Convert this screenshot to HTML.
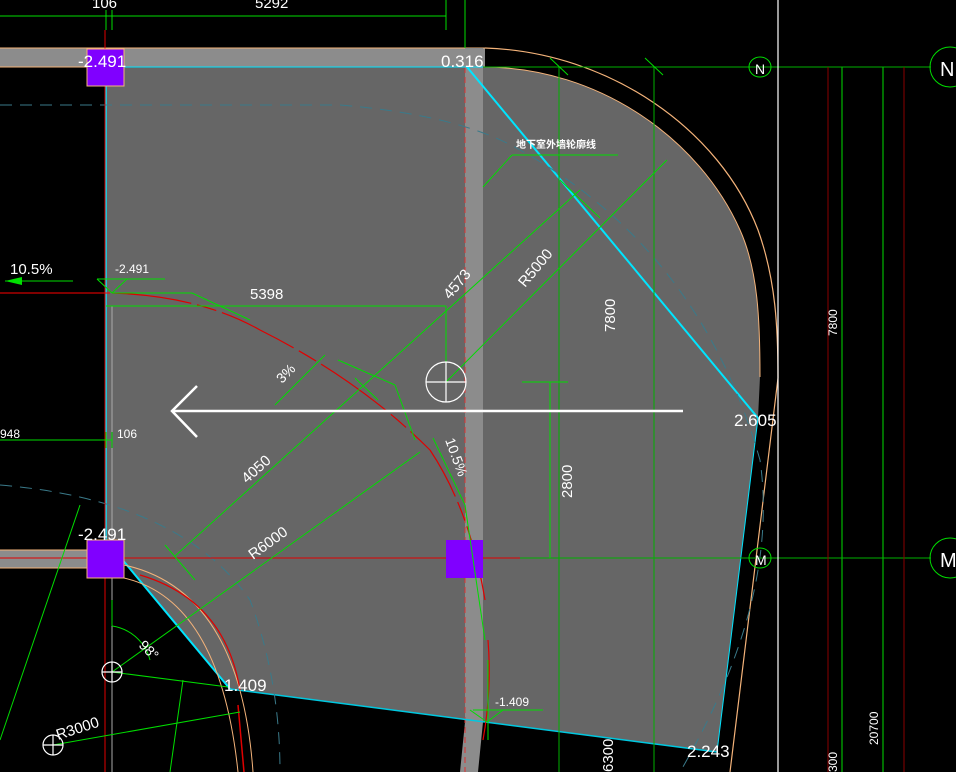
<!DOCTYPE html>
<html><head><meta charset="utf-8"><style>
html,body{margin:0;padding:0;background:#000;width:956px;height:772px;overflow:hidden}
svg{display:block}
text{font-family:"Liberation Sans","Noto Sans CJK SC",sans-serif;fill:#fff}
.n{font-family:"Liberation Sans Narrow","Liberation Sans",sans-serif}
</style></head><body>
<svg width="956" height="772" viewBox="0 0 956 772" xmlns="http://www.w3.org/2000/svg">
<rect width="956" height="772" fill="#000"/>
<path d="M106 67 L483 67 C600 67 700 140 740 230 C758 270 760 320 760 377 L758 418 L717 752 L483 722 L230 689 L106 540 Z" fill="#666"/>
<rect x="0" y="48" width="485" height="19" fill="#8c8c8c"/>
<line x1="0" y1="48" x2="485" y2="48" stroke="#f4b37a" stroke-width="1"/>
<line x1="0" y1="67" x2="483" y2="67" stroke="#f4b37a" stroke-width="1"/>
<rect x="0" y="550" width="106" height="18" fill="#8c8c8c"/>
<line x1="0" y1="550" x2="106" y2="550" stroke="#f4b37a"/>
<line x1="0" y1="568" x2="106" y2="568" stroke="#f4b37a"/>
<path d="M465 48 L483 48 L483 722 L478 772 L460 772 L465 722 Z" fill="#8c8c8c"/>
<line x1="465" y1="67" x2="465" y2="772" stroke="#e03030" stroke-dasharray="6 4" stroke-width="1"/>
<path d="M485 48 C610 52 720 130 758 230 C776 280 778 330 778 378 L730 772" fill="none" stroke="#f4b37a" stroke-width="1.2"/>
<path d="M483 67 C600 67 700 140 740 230 C758 270 760 320 760 377" fill="none" stroke="#f4b37a" stroke-width="1"/>
<line x1="106" y1="67" x2="106" y2="540" stroke="#00e5ff" stroke-width="1.5"/>
<line x1="106" y1="67" x2="483" y2="67" stroke="#00e5ff" stroke-width="1"/>
<line x1="467" y1="67" x2="758" y2="418" stroke="#00e5ff" stroke-width="2"/>
<line x1="758" y1="418" x2="717" y2="752" stroke="#00e5ff" stroke-width="1"/>
<line x1="717" y1="752" x2="230" y2="689" stroke="#00c8e0" stroke-width="1.5"/>
<line x1="106" y1="540" x2="230" y2="689" stroke="#00e5ff" stroke-width="2"/>
<path d="M0 105 L340 105 Q460 115 520 150 Q700 250 760 460 Q780 600 680 772" fill="none" stroke="#3a7a8a" stroke-dasharray="12 8" stroke-width="1"/>
<path d="M0 485 Q180 500 250 600 Q280 680 280 772" fill="none" stroke="#3a7a8a" stroke-dasharray="12 8" stroke-width="1"/>
<path d="M124 578 Q220 600 238 772" fill="none" stroke="#f4b37a"/>
<path d="M124 565 Q240 590 253 772" fill="none" stroke="#f4b37a"/>
<path d="M140 575 Q225 600 240 690" fill="none" stroke="#e00000" stroke-width="1.2"/>
<line x1="238" y1="705" x2="244" y2="772" stroke="#e00000" stroke-width="1.5"/>
<path d="M112 293 Q200 296 260 330 Q360 380 430 450 Q470 510 485 600" fill="none" stroke="#e00000" stroke-width="1.2" stroke-dasharray="80 6 20 6"/>
<path d="M488 640 Q492 690 483 740" fill="none" stroke="#e00000" stroke-width="1.2"/>
<line x1="0" y1="293" x2="110" y2="293" stroke="#ff0000" stroke-width="1"/>
<line x1="0" y1="558" x2="520" y2="558" stroke="#e00000" stroke-width="1"/>
<line x1="520" y1="558" x2="760" y2="558" stroke="#c00000" stroke-width="1"/>
<line x1="105" y1="30" x2="105" y2="772" stroke="#e00000" stroke-width="1"/>
<line x1="112" y1="306" x2="112" y2="772" stroke="#aaa" stroke-width="1"/>
<rect x="87" y="49" width="37" height="37" fill="#8000ff" stroke="#f4b37a"/>
<rect x="87" y="540" width="37" height="38" fill="#8000ff" stroke="#f4b37a"/>
<rect x="446" y="540" width="37" height="38" fill="#8000ff"/>
<g stroke="#00dd00" stroke-width="1" fill="none">
<line x1="0" y1="16" x2="446" y2="16"/>
<line x1="106" y1="10" x2="106" y2="30"/><line x1="112" y1="10" x2="112" y2="30"/><line x1="446" y1="0" x2="446" y2="30"/>
<line x1="465" y1="0" x2="465" y2="48"/>
<line x1="446" y1="306" x2="446" y2="400"/>
<line x1="559" y1="67" x2="559" y2="772" stroke="#00b000"/>
<line x1="654" y1="67" x2="654" y2="772" stroke="#00b000"/>
<line x1="842" y1="67" x2="842" y2="772"/>
<line x1="883" y1="67" x2="883" y2="772"/>
<line x1="483" y1="67" x2="931" y2="67" stroke="#00b000"/>
<line x1="520" y1="558" x2="931" y2="558" stroke="#00b000"/>
<ellipse cx="760" cy="67" rx="11" ry="10"/>
<ellipse cx="760" cy="558" rx="11" ry="10"/>
<ellipse cx="950" cy="67" rx="20" ry="20"/>
<ellipse cx="950" cy="558" rx="20" ry="20"/>
<line x1="5" y1="281" x2="73" y2="281"/>
<line x1="97" y1="279" x2="112" y2="293"/><line x1="112" y1="293" x2="127" y2="279"/><line x1="97" y1="279" x2="165" y2="279"/>
<line x1="112" y1="293" x2="192" y2="293"/><line x1="192" y1="293" x2="250" y2="320"/>
<line x1="106" y1="306" x2="446" y2="306"/>
<line x1="0" y1="440" x2="112" y2="440"/>
<line x1="106" y1="432" x2="106" y2="448"/><line x1="112" y1="432" x2="112" y2="448"/>
<line x1="175" y1="556" x2="580" y2="190"/>
<line x1="165" y1="545" x2="195" y2="580"/>
<line x1="560" y1="180" x2="600" y2="218"/>
<line x1="112" y1="672" x2="420" y2="452"/>
<line x1="446" y1="382" x2="667" y2="160"/>
<line x1="275" y1="405" x2="325" y2="355"/>
<line x1="338" y1="360" x2="395" y2="385"/><line x1="395" y1="385" x2="415" y2="440"/>
<line x1="355" y1="378" x2="378" y2="400"/>
<line x1="433" y1="438" x2="465" y2="505"/>
<line x1="465" y1="505" x2="485" y2="640"/>
<line x1="483" y1="187" x2="512" y2="155"/><line x1="512" y1="155" x2="618" y2="155"/>
<line x1="550" y1="382" x2="550" y2="558"/><line x1="522" y1="382" x2="568" y2="382"/>
<line x1="550" y1="58" x2="568" y2="75"/><line x1="645" y1="58" x2="663" y2="75"/>
<line x1="112" y1="626" x2="112" y2="600"/>
<path d="M112 626 A46 46 0 0 1 150 660"/>
<line x1="112" y1="672" x2="228" y2="687"/>
<line x1="53" y1="745" x2="240" y2="712"/>
<line x1="0" y1="740" x2="80" y2="505"/>
<line x1="183" y1="680" x2="170" y2="772"/>
<line x1="488" y1="660" x2="488" y2="740"/><line x1="473" y1="710" x2="543" y2="710"/>
<line x1="470" y1="710" x2="487" y2="722"/><line x1="503" y1="710" x2="487" y2="722"/>
</g>
<g stroke="#8a0000" stroke-width="1"><line x1="828" y1="67" x2="828" y2="772"/><line x1="904" y1="67" x2="904" y2="772"/></g>
<polygon points="5,281 22,277 22,285" fill="#00e000"/>
<line x1="778" y1="0" x2="778" y2="772" stroke="#fff" stroke-width="1.2"/>
<g stroke="#fff" stroke-width="2.5" fill="none"><line x1="172" y1="411" x2="683" y2="411"/><polyline points="197,386 172,411 197,437"/></g>
<g stroke="#fff" stroke-width="1.2" fill="none">
<circle cx="446" cy="382" r="20"/><line x1="426" y1="382" x2="466" y2="382"/><line x1="446" y1="362" x2="446" y2="402"/>
<circle cx="112" cy="672" r="10"/><line x1="102" y1="672" x2="122" y2="672"/><line x1="112" y1="662" x2="112" y2="682"/>
<circle cx="53" cy="745" r="10"/><line x1="43" y1="745" x2="63" y2="745"/><line x1="53" y1="735" x2="53" y2="755"/>
</g>
<text x="78" y="67" font-size="17">-2.491</text>
<text x="441" y="67" font-size="17">0.316</text>
<text x="78" y="540" font-size="17">-2.491</text>
<text x="734" y="426" font-size="17">2.605</text>
<text x="224" y="691" font-size="17">1.409</text>
<text x="687" y="757" font-size="17">2.243</text>
<text x="92" y="8" font-size="15" class="n">106</text>
<text x="255" y="8" font-size="15" class="n">5292</text>
<text x="10" y="274" font-size="15" class="n">10.5%</text>
<text x="115" y="273" font-size="12" class="n">-2.491</text>
<text x="250" y="299" font-size="15" class="n">5398</text>
<text x="0" y="438" font-size="12" class="n">948</text>
<text x="117" y="438" font-size="12" class="n">106</text>
<text x="495" y="706" font-size="12" class="n">-1.409</text>
<text x="516" y="148" font-size="10" font-weight="bold">地下室外墙轮廓线</text>
<text x="755" y="74" font-size="14">N</text>
<text x="755" y="565" font-size="14">M</text>
<text x="940" y="76" font-size="20" class="n">N</text>
<text x="940" y="567" font-size="20" class="n">M</text>
<text font-size="15" transform="translate(615,332) rotate(-90)" class="n">7800</text>
<text font-size="15" transform="translate(572,498) rotate(-90)" class="n">2800</text>
<text font-size="12" transform="translate(837,336) rotate(-90)" class="n">7800</text>
<text font-size="12" transform="translate(878,745) rotate(-90)" class="n">20700</text>
<text font-size="12" transform="translate(837,772) rotate(-90)" class="n">300</text>
<text font-size="15" transform="translate(613,772) rotate(-90)" class="n">6300</text>
<text font-size="15" transform="translate(450,300) rotate(-50)" class="n">4573</text>
<text font-size="15" transform="translate(525,288) rotate(-50)" class="n">R5000</text>
<text font-size="15" transform="translate(247,484) rotate(-42)" class="n">4050</text>
<text font-size="15" transform="translate(253,560) rotate(-36)" class="n">R6000</text>
<text font-size="14" transform="translate(282,384) rotate(-45)" class="n">3%</text>
<text font-size="14" transform="translate(445,440) rotate(70)" class="n">10.5%</text>
<text font-size="14" transform="translate(138,646) rotate(45)" class="n">98°</text>
<text font-size="15" transform="translate(58,740) rotate(-18)" class="n">R3000</text>
<text font-size="15" transform="translate(0,680) rotate(-100)" class="n">3000</text>
</svg>
</body></html>
